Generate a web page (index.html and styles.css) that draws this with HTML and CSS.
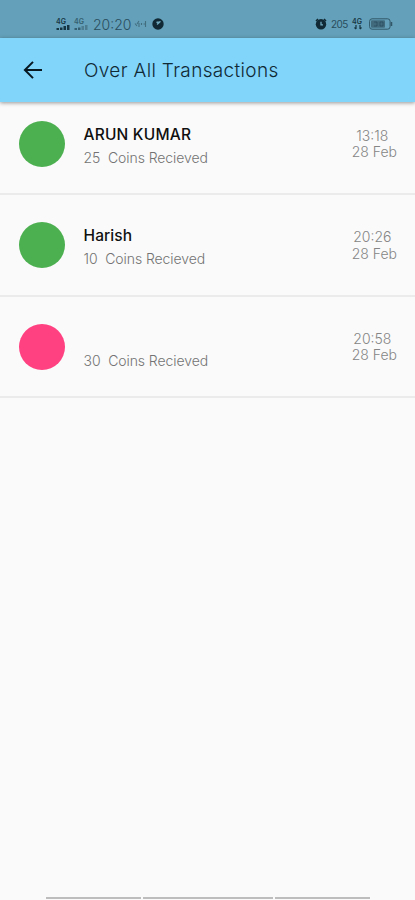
FILE: index.html
```html
<!DOCTYPE html>
<html lang="en">
<head>
<meta charset="utf-8">
<title>Over All Transactions</title>
<link rel="stylesheet" href="styles.css">
</head>
<body>
<div class="screen">
  <div class="status">
    <div class="status-left">
      <span class="signal"><span class="net">4G</span><svg width="14" height="5" viewBox="0 0 14 5"><path d="M.5 5V3h2.500v2zm3.500 0V2.500h2.500V5zM7.500 5V1H10v4zm3.500 0V0h2.500v5z"/></svg></span>
      <span class="signal dim"><span class="net">4G</span><svg width="14" height="5" viewBox="0 0 14 5"><path d="M.5 5V3h2.500v2zm3.500 0V2.500h2.500V5z"/><path class="weak" d="M7.500 5V1H10v4zm3.500 0V0h2.500v5z"/></svg></span>
      <span class="clock">20:20</span>
      <svg class="cast" width="13" height="10" viewBox="0 0 13 10"><path d="M1 4.500L3 7M3 5l2-3M5 4v4M7.500 4v2M9.500 5H11M11.500 2v6" fill="none" stroke="#426e80" stroke-width="1.100"/></svg>
      <svg class="disc" width="12" height="12" viewBox="0 0 12 12"><circle cx="6" cy="6" r="5.700" fill="#102934"/><path d="M5.500 6L8 3.800M5 4.200h2" stroke="#70a9bf" stroke-width="1.500" stroke-linecap="round"/></svg>
    </div>
    <div class="status-right">
      <svg width="12" height="12" viewBox="0 0 12 12"><path d="M1 3l2-2M11 3L9 1" stroke="#102934" stroke-width="1.500"/><circle cx="6" cy="6.200" r="5.200" fill="#102934"/><path d="M6 3.800v3h2" fill="none" stroke="#70a9bf" stroke-width="1.300"/></svg>
      <span class="rate">205</span>
      <span class="lte"><span class="net">4G</span><svg width="12" height="5" viewBox="0 0 12 5"><path d="M4 0v4M2.500 2.500L4 4M8 4V0M8 4l1.500-1.500" fill="none" stroke="#173643" stroke-width="1.200"/></svg></span>
      <svg class="battery" width="24" height="12" viewBox="0 0 24 12"><rect x=".6" y=".8" width="20.500" height="10.400" rx="2.500" fill="none" stroke="#315768"/><rect x="2" y="2.200" width="14" height="7.600" rx="1" fill="#416b7d"/><path d="M22.500 4v4" stroke="#315768" stroke-width="1.500"/><path d="M5 4h3v4H5m6-4h3v4h-3z" fill="none" stroke="#254b5b" stroke-width=".7"/></svg>
    </div>
  </div>
  <header class="appbar">
    <svg class="back" width="20" height="20" viewBox="0 0 20 20"><path d="M10 1.900L1.900 10l8.100 8.100M2 10h17" fill="none" stroke="#071820" stroke-width="2"/></svg>
    <h1 class="title">Over All Transactions</h1>
  </header>
  <main class="list">
    <article class="row">
      <div class="avatar"></div>
      <div class="info"><div class="name name-caps">ARUN KUMAR</div><div class="detail">25&nbsp; Coins Recieved</div></div>
      <div class="when"><div>13:18</div><div>28 Feb</div></div>
    </article>
    <article class="row">
      <div class="avatar"></div>
      <div class="info"><div class="name">Harish</div><div class="detail">10&nbsp; Coins Recieved</div></div>
      <div class="when"><div>20:26</div><div>28 Feb</div></div>
    </article>
    <article class="row">
      <div class="avatar pink"></div>
      <div class="info"><div class="name"></div><div class="detail">30&nbsp; Coins Recieved</div></div>
      <div class="when"><div>20:58</div><div>28 Feb</div></div>
    </article>
  </main>
  <footer class="nav"><span></span><span class="wide"></span><span></span></footer>
</div>
</body>
</html>
```
FILE: styles.css
```css
* { box-sizing: border-box; }
body { margin: 0; background: #fafafa; font-family: Inter, Roboto, sans-serif; }
.screen { display: flex; flex-direction: column; height: 900px; overflow: hidden; }
.status { height: 38px; flex: none; background: #64a0b9; display: flex; justify-content: space-between; padding: 10px 22px 0 56px; color: #284d5d; }
.status-left, .status-right { display: flex; align-items: center; height: 28px; }
.signal { width: 14px; margin-right: 4px; display: flex; flex-direction: column; fill: #173643; color: #173643; }
.signal.dim { fill: #355f70; color: #355f70; }
.weak { fill: #4d7c90; }
.net { font-size: 7px; line-height: 7px; font-weight: 600; }
.clock { font-size: 14px; font-weight: 300; width: 38px; margin-left: 1px; white-space: nowrap; }
.cast { margin-left: 3px; }
.disc { margin-left: 5px; }
.rate { font-size: 10px; letter-spacing: -.6px; width: 16px; margin-left: 4px; }
.lte { width: 12px; margin-left: 5px; display: flex; flex-direction: column; color: #173643; }
.battery { margin-left: 5px; }
.appbar { height: 64px; flex: none; background: #81d4fa; display: flex; align-items: center; padding-left: 23px; box-shadow: 0 1px 4px rgba(0,0,0,.4); z-index: 1; }
.title { margin: 0 0 0 41px; font-size: 19px; font-weight: 300; letter-spacing: .34px; color: #102a35; white-space: nowrap; }
.list { flex: 1; }
.row { display: flex; height: 101.500px; padding: 27px 18px 0 19px; border-bottom: 2px solid #ebebeb; }
.row:first-child { height: 93px; padding-top: 18.500px; }
.avatar { width: 46px; height: 46px; flex: none; border-radius: 50%; background: #4caf50; }
.avatar.pink { background: #ff4081; }
.info { flex: 1; padding: 4px 0 0 18.500px; }
.name { height: 20px; line-height: 20px; font-size: 15.500px; font-weight: 500; color: #101010; letter-spacing: .1px; }
.name-caps { letter-spacing: .2px; }
.detail { margin-top: 3px; line-height: 20px; font-size: 14px; font-weight: 300; color: #737373; letter-spacing: -.08px; white-space: nowrap; }
.when { padding-top: 7px; text-align: center; font-size: 14px; line-height: 16.500px; font-weight: 300; color: #858585; }
.when div:first-child { padding-right: 4px; }
.nav { height: 3px; flex: none; display: flex; gap: 2px; padding-left: 46px; }
.nav span { width: 95px; height: 2px; background: #bdbdbd; }
.nav .wide { width: 130px; }
```
